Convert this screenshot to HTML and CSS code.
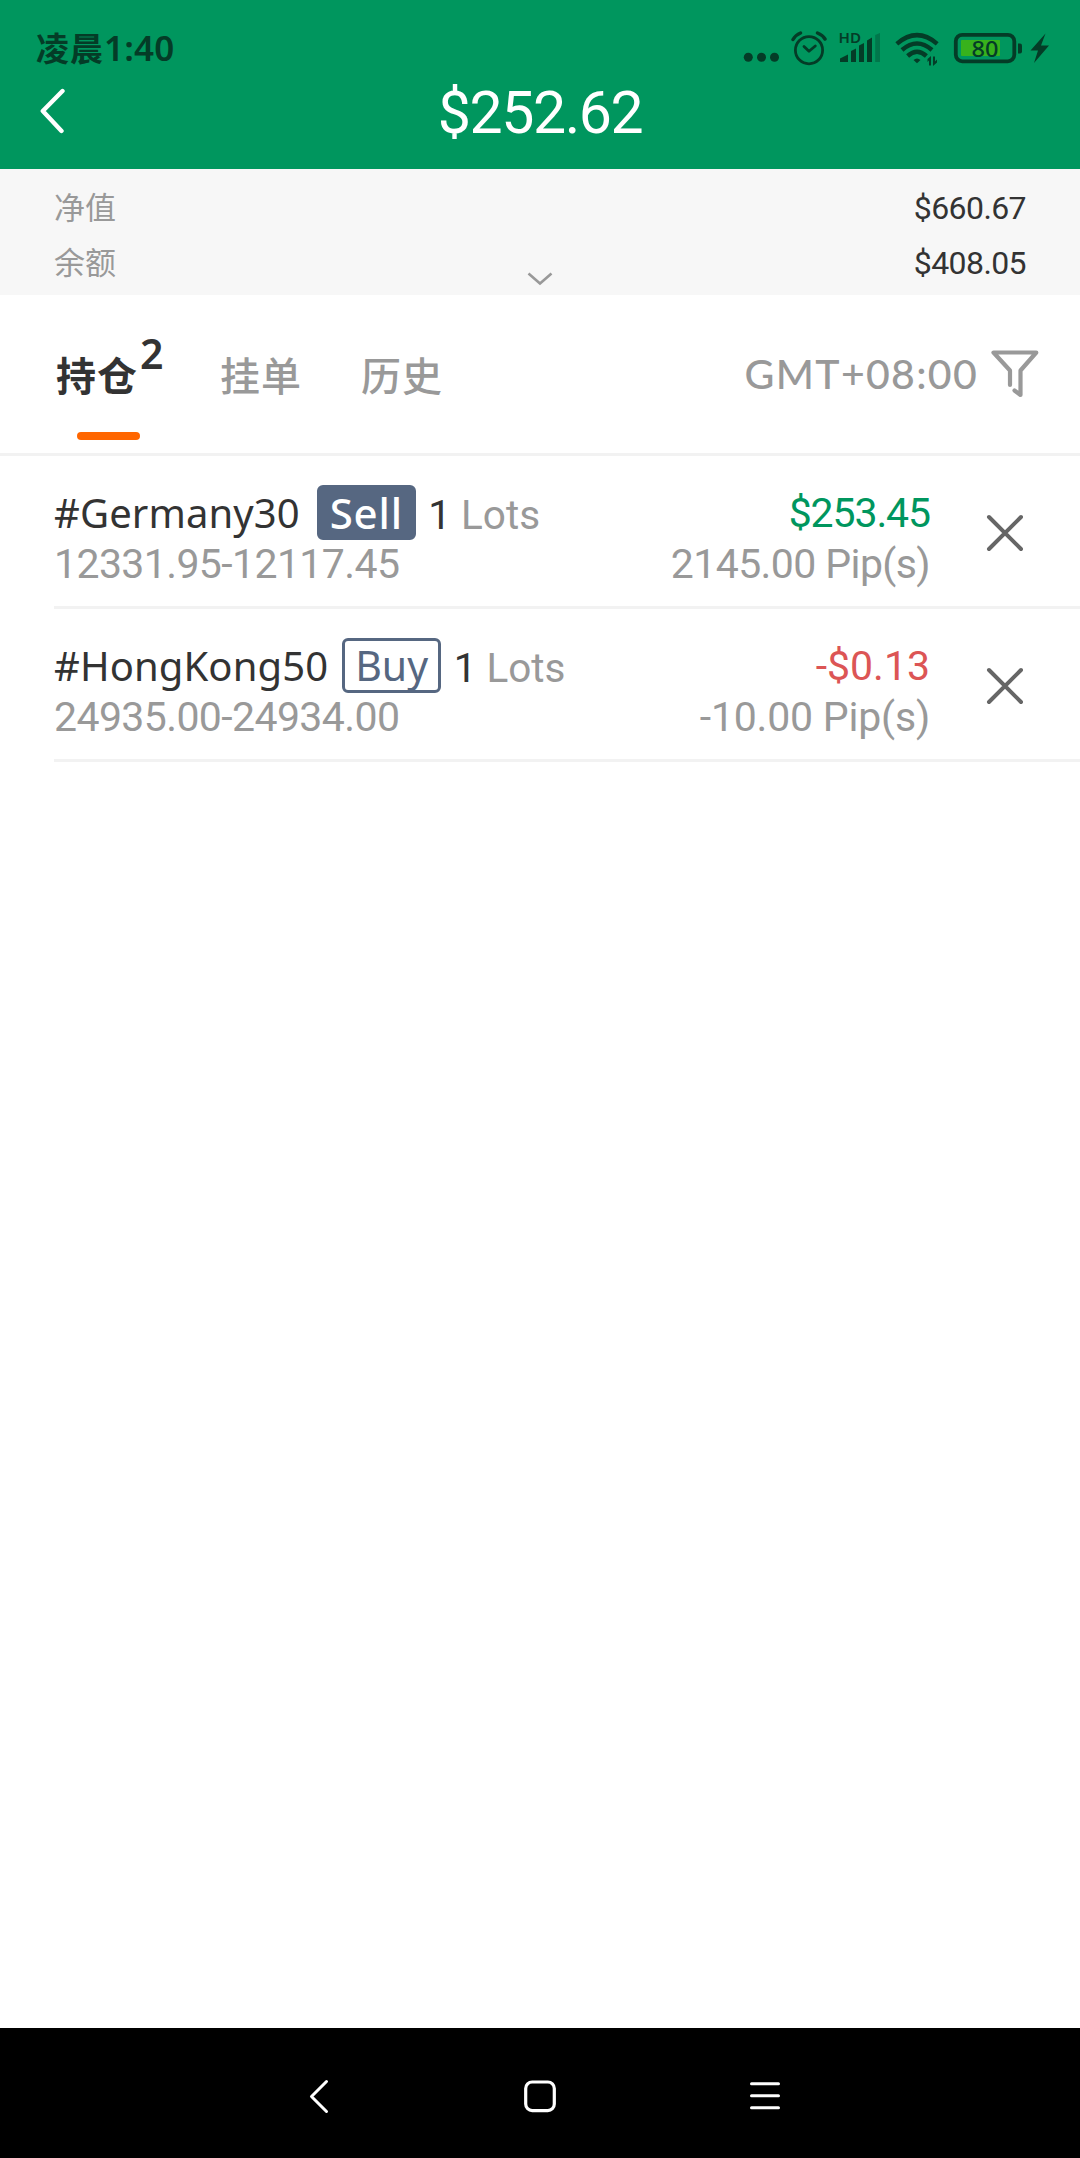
FILE: index.html
```html
<!DOCTYPE html>
<html lang="zh-CN">
<head>
<meta charset="utf-8">
<title>持仓</title>
<link rel="stylesheet" href="styles.css">
</head>
<body>
<div class="app">
  <header class="header">
    <div class="status">
      <span class="clock">凌晨<span class="clock-digits">1:40</span></span>
      <div class="status-icons">
        <svg class="status-dots" width="36" height="40" viewBox="743 28 36 40"><circle cx="748.3" cy="57.3" r="4.5"/><circle cx="761.5" cy="57.3" r="4.5"/><circle cx="774.5" cy="57.3" r="4.5"/></svg>
        <svg class="line-icon" width="36" height="40" viewBox="791 28 36 40"><circle cx="809" cy="50.2" r="13.6" stroke-width="2.8"/><path d="M804 46.5l5 4.8 6.3-5.3" stroke-width="2.8"/><path d="M793 39.5q2.5-4.5 7.5-6.5M817.500 33q5 2 7.500 6" stroke-width="3.4"/></svg>
        <svg width="44" height="40" viewBox="838 28 44 40"><text class="hd" x="838.500" y="43" textLength="22.5" lengthAdjust="spacingAndGlyphs">HD</text><path d="M840 62v-3.500l8-4v7.500zM851 62V51l5-2.500V62zM859 62V45.500l5-2.500V62zM867 62V40.500l5-3V62z"/><path class="faint" d="M875.200 62V35l4.800-2v29z"/></svg>
        <svg class="wifi" width="44" height="40" viewBox="895 28 44 40"><g fill="none" stroke="currentColor" stroke-width="4.400"><path d="M896.800 43.800Q917 26.500 937.200 43.800"/><path d="M902 50Q917 37 932 50"/><path d="M907.600 56Q917 47.500 926.400 56"/></g><path d="M913.500 60q3.500-3 7 0l-3.500 3.300z"/><path d="M931 56v9.500h-2v-5l-1.500 1.500v-3zM933 66v-9.500h2v5l2-2v3z"/></svg>
        <svg width="70" height="40" viewBox="953 28 70 40"><rect x="955.800" y="34.800" width="58.500" height="26.500" rx="6.500" fill="none" stroke="currentColor" stroke-width="3.800"/><rect class="charge" x="961" y="40" width="39" height="16" rx="1"/><path d="M1018 43.500h2q2 0 2 2v6q0 2-2 2h-2z"/><text class="percent" x="971.500" y="56.500" textLength="27" lengthAdjust="spacingAndGlyphs">80</text></svg>
        <svg width="20" height="40" viewBox="1030 28 20 40"><path d="M1045.500 33.500L1030.500 50.500h7.500l-4 12.500L1049 45.500h-8z"/></svg>
      </div>
    </div>
    <div class="titlebar">
      <svg class="back" width="28" height="48" viewBox="38 88 28 48"><path d="M62.500 91L42.800 111 61.500 131"/></svg>
      <h1 class="title">$252.62</h1>
    </div>
  </header>

  <section class="summary">
    <div class="summary-row"><span class="label">净值</span><span class="value">$660.67</span></div>
    <div class="summary-row"><span class="label">余额</span><span class="value">$408.05</span></div>
    <svg class="expand" width="28" height="16" viewBox="0 0 28 16"><path d="M2.500 2.500L14 12.500 25.500 2.500"/></svg>
  </section>

  <nav class="tabs">
    <a class="tab active">持仓<span class="count">2</span></a>
    <a class="tab">挂单</a>
    <a class="tab">历史</a>
    <span class="zone">GMT+08:00</span>
    <svg class="filter" width="48" height="50" viewBox="991 349 48 50"><path d="M1010 385V370.500L993.500 352.500H1036.300L1020.500 370.500V395L1014.500 390.500"/></svg>
  </nav>

  <main class="list">
    <article class="position">
      <div class="info">
        <div class="headline"><span class="name">#Germany30</span><span class="side sell">Sell</span><span class="qty">1</span><span class="unit">Lots</span></div>
        <div class="sub">12331.95-12117.45</div>
      </div>
      <div class="result">
        <div class="amount gain">$253.45</div>
        <div class="sub">2145.00 Pip(s)</div>
      </div>
      <svg class="close" width="40" height="40" viewBox="0 0 40 40"><path d="M4 4L36 36M36 4L4 36"/></svg>
    </article>
    <article class="position">
      <div class="info">
        <div class="headline"><span class="name">#HongKong50</span><span class="side buy">Buy</span><span class="qty">1</span><span class="unit">Lots</span></div>
        <div class="sub">24935.00-24934.00</div>
      </div>
      <div class="result">
        <div class="amount loss">-$0.13</div>
        <div class="sub">-10.00 Pip(s)</div>
      </div>
      <svg class="close" width="40" height="40" viewBox="0 0 40 40"><path d="M4 4L36 36M36 4L4 36"/></svg>
    </article>
  </main>

  <footer class="system-nav">
    <svg width="36" height="40" viewBox="0 0 36 40"><path d="M29.500 5.500L14.500 20.500 29.500 35.500" stroke-width="3"/></svg>
    <svg width="36" height="40" viewBox="0 0 36 40"><rect x="3.700" y="6" width="28.600" height="28.600" rx="6.500" stroke-width="3.200"/></svg>
    <svg width="36" height="40" viewBox="0 0 36 40"><path d="M4.500 7.800H31.500M4.500 19.800H31.500M4.500 31.800H31.500" stroke-width="3"/></svg>
  </footer>
</div>
</body>
</html>
```
FILE: styles.css
```css
* { box-sizing: border-box; }
body {
  margin: 0;
  background: #fff;
  font-family: Roboto, "Noto Sans CJK SC", sans-serif;
  color: #333;
}
svg { display: block; flex: none; }
.app { display: flex; flex-direction: column; width: 1080px; height: 2158px; overflow: hidden; }

.header { height: 169px; background: #00965e; }
.status {
  display: flex;
  justify-content: space-between;
  height: 72px;
  padding: 28px 30px 0 36px;
  color: #043c27;
}
.clock { margin-top: -2px; font: 700 33px/42px "Noto Sans CJK SC", sans-serif; letter-spacing: 1px; white-space: nowrap; }
.clock-digits { font: 600 35px/42px "Noto Sans", sans-serif; letter-spacing: .2px; }
.status-icons { display: flex; height: 40px; fill: currentColor; }
.status-icons svg { margin-left: 12px; }
.status-icons svg:nth-child(3) { margin-left: 11px; }
.status-icons svg:nth-child(4) { margin-left: 13px; }
.status-icons svg:nth-child(5) { margin-left: 14px; }
.status-icons svg:nth-child(6) { margin-left: 7px; }
.status-icons .line-icon { fill: none; stroke: currentColor; stroke-linecap: round; stroke-linejoin: round; }
.hd { font: 600 15px "Noto Sans", sans-serif; }
.percent { font: 500 22px "Noto Sans", sans-serif; }
.faint { opacity: .35; }
.charge { fill: #38b21c; }
.titlebar { display: grid; grid-template-columns: 66px 1fr 66px; align-items: center; height: 80px; }
.back { margin: -1px 0 0 38px; fill: none; stroke: #fff; stroke-width: 4.4; stroke-linecap: round; stroke-linejoin: round; }
.title { margin: 0; padding-top: 1px; text-align: center; color: #fff; font-size: 59px; font-weight: 400; line-height: 80px; letter-spacing: -1.4px; }

.summary { height: 125.5px; padding: 12px 54px 0; background: #f7f7f7; position: relative; }
.summary-row { display: flex; justify-content: space-between; height: 55px; line-height: 55px; }
.label { color: #999; font-size: 31px; }
.value { font-size: 32px; letter-spacing: -.6px; }
.expand { position: absolute; left: 526px; top: 102px; fill: none; stroke: #999; stroke-width: 2.6; }

.tabs { display: flex; align-items: center; height: 161px; padding: 0 41px 0 56px; border-bottom: 3px solid #f2f2f2; }
.tab { position: relative; height: 158px; margin-right: 59px; font: 500 40px/158px "Noto Sans CJK SC", sans-serif; color: #999; white-space: nowrap; letter-spacing: 1px; }
.tab.active { font-weight: 700; color: #333; width: 105px; }
.tab.active::after { content: ""; position: absolute; left: 21px; bottom: 13px; width: 63px; height: 8px; border-radius: 4px; background: #f60; }
.count { position: absolute; left: 84px; top: 35px; font: 600 41px/46px "Noto Sans", sans-serif; }
.zone { margin-left: auto; margin-right: 13px; color: #999; font: 500 41px Lato, sans-serif; letter-spacing: 1.3px; }
.filter { fill: none; stroke: #999; stroke-width: 4.2; stroke-linecap: round; stroke-linejoin: round; }

.list { flex: 1; padding-left: 54px; }
.position { display: flex; height: 153px; padding: 29px 55px 0 0; border-bottom: 3px solid #f2f2f2; }
.info { flex: 1; }
.headline { display: flex; height: 55px; line-height: 55px; font-size: 40.5px; white-space: nowrap; }
.name { font: 450 40px/55px "Noto Sans", sans-serif; letter-spacing: .1px; }
.side { margin-left: 15.5px; width: 99px; height: 55px; border: 3px solid #566781; border-radius: 6px; text-align: center; font: 500 42px/49px "Noto Sans", sans-serif; }
.sell { margin-left: 17px; background: #566781; color: #fff; letter-spacing: .8px; }
.buy { margin-left: 14px; color: #566781; font-size: 41px; font-weight: 400; }
.qty { margin-left: 12.5px; line-height: 61px; }
.unit { margin-left: 10px; color: #999; line-height: 61px; }
.sub { height: 46px; line-height: 48px; font-size: 41px; letter-spacing: -.6px; color: #999; white-space: nowrap; }
.result { text-align: right; margin-right: 55px; }
.amount { height: 55px; line-height: 57px; font-size: 41px; }
.gain { color: #00965e; letter-spacing: -1.1px; }
.loss { color: #dc5555; }
.loss + .sub { letter-spacing: -.2px; }
.close { margin-top: 28px; fill: none; stroke: #666; stroke-width: 4; stroke-linecap: round; }

.system-nav { display: flex; justify-content: center; gap: 189px; height: 130.5px; padding-top: 48px; background: #000; stroke: #fff; stroke-linecap: round; stroke-linejoin: round; }
.system-nav svg { fill: none; }
```
